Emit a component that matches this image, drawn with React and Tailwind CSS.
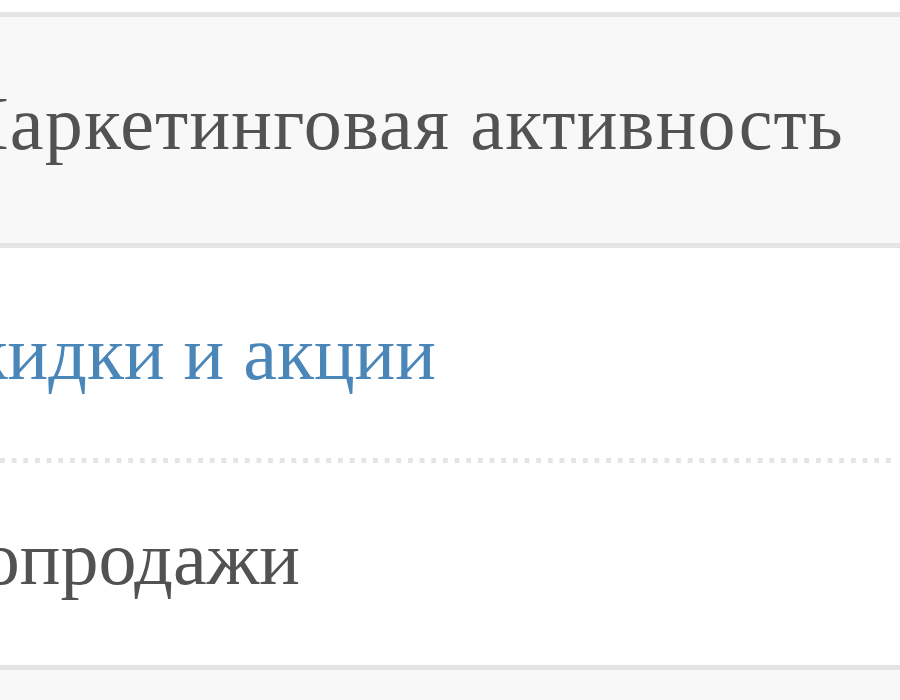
import React from "react";

const serif = { fontFamily: '"Liberation Serif", "DejaVu Serif", serif' };

export default function App() {
  return (
    <div className="w-[900px] h-[700px] overflow-hidden bg-white" style={serif}>
      <div className="h-[12px]" />
      {/* Section header */}
      <div className="h-[236px] border-y-[5px] border-[#e4e4e4] bg-[#f8f8f8] pt-[68px]">
        <div className="whitespace-nowrap text-[76px] leading-none tracking-[1.2px] text-[#525252] ml-[-59px]">
          Маркетинговая активность
        </div>
      </div>

      {/* Items */}
      <div className="h-[210px] pt-[67px]">
        <a className="block whitespace-nowrap text-[76px] leading-none text-[#4a86b8] ml-[-80px]">
          Скидки и акции
        </a>
      </div>
      <div className="h-[5px] mr-[4px] bg-[linear-gradient(to_right,#e4e4e4_45%,transparent_45%)] bg-[length:11.67px_5px] bg-repeat-x" />
      <div className="h-[207px] pt-[57px] border-b-[5px] border-[#e4e4e4]">
        <div className="whitespace-nowrap text-[76px] leading-none text-[#525252] ml-[-70px]">
          Допродажи
        </div>
      </div>
      <div className="h-[40px] bg-[#f8f8f8]" />
    </div>
  );
}
